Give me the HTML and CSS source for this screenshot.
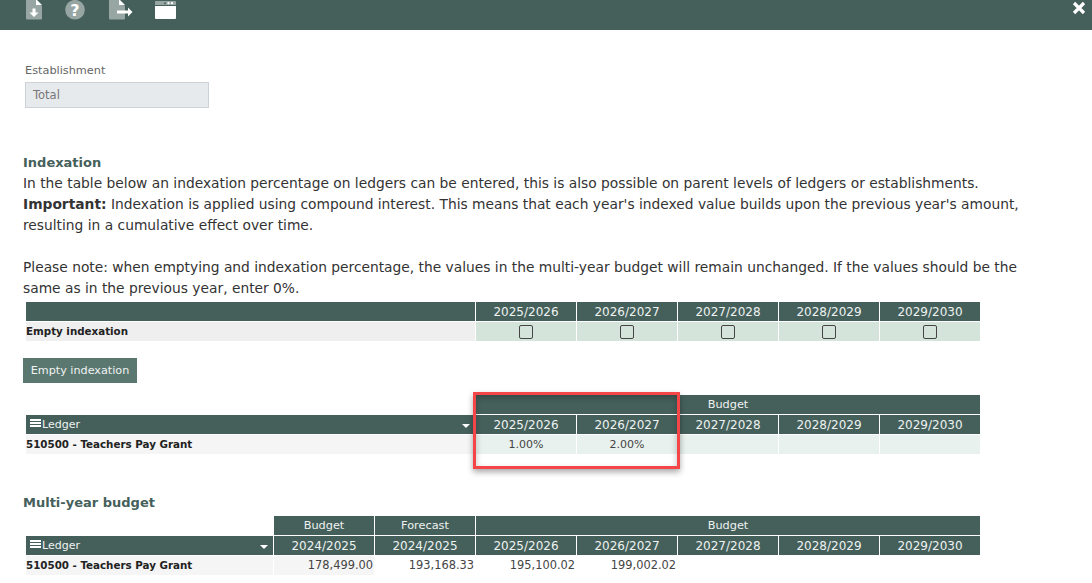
FILE: index.html
```html
<!DOCTYPE html>
<html lang="en">
<head>
    <meta charset="UTF-8">
    <title>Indexation</title>
    <link rel="stylesheet" href="styles.css">
</head>
<body>
    <div class="topbar">
        <div class="topbar-icons">
            <svg class="icon-doc" viewBox="0 0 16 20" width="16" height="20">
                <path d="M0 0H10L16 6V18.500a1 1 0 0 1-1 1H1a1 1 0 0 1-1-1Z" fill="#98a6a3"/>
                <path d="M10 -1L16 5H10Z" fill="#fff"/>
                <path d="M6.500 8.500H9.500V12.500H12.500L8 17L3.500 12.500H6.500Z" fill="#fff"/>
            </svg>
            <svg class="icon-help" viewBox="0 0 20 20" width="20" height="20">
                <circle cx="10" cy="9.700" r="9.800" fill="#98a6a3"/>
                <text x="10" y="15.500" text-anchor="middle" class="icon-help-mark">?</text>
            </svg>
            <svg class="icon-export" viewBox="0 0 24 20" width="24" height="20">
                <path d="M0 0H10L16 6V18.500a1 1 0 0 1-1 1H1a1 1 0 0 1-1-1Z" fill="#98a6a3"/>
                <path d="M10 -1L16 5H10Z" fill="#fff"/>
                <path d="M8 10.500H19V7.500L23.500 12L19 16.500V13.500H8Z" fill="#fff"/>
            </svg>
            <svg class="icon-window" viewBox="0 0 21 19" width="21" height="19">
                <path d="M1 0H20a1 1 0 0 1 1 1V4H0V1a1 1 0 0 1 1-1Z" fill="#98a6a3"/>
                <path d="M0 5H21V17a1 1 0 0 1-1 1H1a1 1 0 0 1-1-1Z" fill="#fff"/>
                <circle cx="10" cy="2.200" r="1" fill="#45605b"/>
                <circle cx="13.500" cy="2.200" r="1.100" fill="#fff"/>
                <circle cx="17" cy="2.200" r="1.100" fill="#fff"/>
            </svg>
        </div>
        <svg class="icon-close" viewBox="0 0 14 14" width="14" height="14">
            <path d="M2 2L12 12M12 2L2 12" stroke="#fff" stroke-width="3.200" fill="none"/>
        </svg>
    </div>

    <div class="content">
        <div class="field">
            <label class="field-label">Establishment</label>
            <div class="field-input">Total</div>
        </div>

        <h3 class="section-title">Indexation</h3>
        <p class="intro">In the table below an indexation percentage on ledgers can be entered, this is also possible on parent levels of ledgers or establishments.<br>
        <b>Important:</b> Indexation is applied using compound interest. This means that each year's indexed value builds upon the previous year's amount,<br>
        resulting in a cumulative effect over time.</p>
        <p class="intro note">Please note: when emptying and indexation percentage, the values in the multi-year budget will remain unchanged. If the values should be the<br>
        same as in the previous year, enter 0%.</p>

        <table class="grid">
            <colgroup><col class="col-wide"><col class="col-year"><col class="col-year"><col class="col-year"><col class="col-year"><col class="col-year"></colgroup>
            <tr>
                <th></th><th>2025/2026</th><th>2026/2027</th><th>2027/2028</th><th>2028/2029</th><th>2029/2030</th>
            </tr>
            <tr class="row-check">
                <td class="row-name row-name-dark">Empty indexation</td>
                <td class="check-cell"><span class="check"></span></td>
                <td class="check-cell"><span class="check"></span></td>
                <td class="check-cell"><span class="check"></span></td>
                <td class="check-cell"><span class="check"></span></td>
                <td class="check-cell"><span class="check"></span></td>
            </tr>
        </table>

        <button class="btn">Empty indexation</button>

        <div class="highlight-wrap">
            <table class="grid">
                <colgroup><col class="col-wide"><col class="col-year"><col class="col-year"><col class="col-year"><col class="col-year"><col class="col-year"></colgroup>
                <tr>
                    <td class="blank"></td><th class="label" colspan="5">Budget</th>
                </tr>
                <tr>
                    <th class="ledger-head"><span class="ledger-inner"><span class="burger"></span>Ledger<span class="caret"></span></span></th>
                    <th>2025/2026</th><th>2026/2027</th><th>2027/2028</th><th>2028/2029</th><th>2029/2030</th>
                </tr>
                <tr>
                    <td class="row-name">510500 - Teachers Pay Grant</td>
                    <td class="pct">1.00%</td><td class="pct">2.00%</td><td class="pct"></td><td class="pct"></td><td class="pct"></td>
                </tr>
            </table>
            <div class="red-box"></div>
        </div>

        <h3 class="section-title multi">Multi-year budget</h3>
        <table class="grid">
            <colgroup><col class="col-ledger"><col class="col-year"><col class="col-year"><col class="col-year"><col class="col-year"><col class="col-year"><col class="col-year"><col class="col-year"></colgroup>
            <tr>
                <td class="blank"></td><th class="label">Budget</th><th class="label">Forecast</th><th class="label" colspan="5">Budget</th>
            </tr>
            <tr>
                <th class="ledger-head"><span class="ledger-inner"><span class="burger"></span>Ledger<span class="caret"></span></span></th>
                <th>2024/2025</th><th>2024/2025</th><th>2025/2026</th><th>2026/2027</th><th>2027/2028</th><th>2028/2029</th><th>2029/2030</th>
            </tr>
            <tr>
                <td class="row-name">510500 - Teachers Pay Grant</td>
                <td class="num num-shaded">178,499.00</td><td class="num">193,168.33</td><td class="num">195,100.02</td><td class="num">199,002.02</td><td class="num"></td><td class="num"></td><td class="num"></td>
            </tr>
        </table>
    </div>
</body>
</html>
```

FILE: styles.css
```css
html, body {
    margin: 0;
    padding: 0;
    height: 583px;
    overflow: hidden;
    background-color: #fff;
}

body {
    font-family: 'DejaVu Sans', sans-serif;
    color: #333;
}

.topbar {
    height: 30px;
    background-color: #45605b;
    display: flex;
    justify-content: space-between;
    overflow: hidden;
}

.topbar-icons {
    display: flex;
    align-items: flex-start;
    padding-left: 26px;
}

.icon-help {
    margin-left: 23px;
}

.icon-export {
    margin-left: 24px;
}

.icon-window {
    margin-left: 22px;
    margin-top: 1px;
}

.icon-help-mark {
    font-family: 'DejaVu Sans', sans-serif;
    font-weight: bold;
    font-size: 16px;
    fill: #fff;
}

.icon-close {
    margin: 1px 6px 0 0;
}

.content {
    padding-left: 23px;
}

.field {
    padding: 34px 0 0 2px;
}

.field-label {
    display: block;
    font-size: 11.300px;
    line-height: 13px;
    color: #666;
    margin-bottom: 5px;
}

.field-input {
    box-sizing: border-box;
    width: 184px;
    height: 26px;
    background-color: #e7eaed;
    border: 1px solid #cdd2d8;
    font-size: 11.500px;
    line-height: 25px;
    padding-left: 7px;
    color: #777;
}

.section-title {
    margin: 46px 0 0;
    font-size: 13px;
    line-height: 17px;
    font-weight: bold;
    color: #45605b;
}

.section-title.multi {
    margin-top: 39px;
    margin-bottom: 4px;
}

.intro {
    margin: 2px 0 0;
    width: 1040px;
    font-size: 13.800px;
    line-height: 21px;
    color: #333;
}

.intro b {
    font-weight: bold;
}

.note {
    margin-top: 21px;
    margin-bottom: 2px;
}

.grid {
    border-collapse: separate;
    border-spacing: 1px;
    table-layout: fixed;
    width: 956px;
    margin-left: 2px;
}

.col-wide {
    width: 449px;
}

.col-ledger {
    width: 247px;
}

.col-year {
    width: 100px;
}

.grid th {
    height: 19px;
    padding: 0;
    background-color: #45605b;
    color: #eef2f1;
    font-weight: normal;
    font-size: 12px;
    text-align: center;
}

.grid th.label {
    font-size: 11.300px;
}

.grid td {
    height: 19px;
    padding: 0;
    font-size: 10.300px;
}

.grid td.blank {
    background: none;
}

.grid td.row-name {
    height: 18px;
    padding-bottom: 1px;
    background-color: #f4f5f4;
    font-weight: bold;
    color: #222;
}

.grid td.row-name-dark {
    background-color: #efefef;
}

.check-cell {
    background-color: #d5e4db;
    text-align: center;
}

.check {
    display: inline-block;
    box-sizing: border-box;
    width: 14px;
    height: 14px;
    margin-top: 1px;
    border: 1px solid #444;
    border-radius: 2px;
    vertical-align: top;
}

.btn {
    display: block;
    box-sizing: border-box;
    width: 114px;
    height: 25px;
    margin: 16px 0 11px;
    padding: 0;
    border: none;
    background-color: #5b7870;
    color: #f0f3f2;
    font-family: inherit;
    font-size: 11.200px;
}

.highlight-wrap {
    position: relative;
}

.grid th.ledger-head {
    font-size: 11px;
}

.ledger-inner {
    display: flex;
    align-items: center;
    padding: 0 5px 0 4px;
    text-align: left;
}

.burger {
    width: 11px;
    height: 8px;
    margin: -3px 1px 0 0;
    background: repeating-linear-gradient(#fff 0 2px, transparent 2px 3px);
}

.caret {
    margin-left: auto;
    margin-top: 2px;
    border-left: 4px solid transparent;
    border-right: 4px solid transparent;
    border-top: 4px solid #fff;
}

.grid td.pct {
    background-color: #e8f1ed;
    text-align: center;
    color: #444;
    font-size: 11px;
}

.grid td.num {
    height: 18px;
    padding: 0 1px 1px 0;
    text-align: right;
    color: #444;
    font-size: 11.400px;
}

.grid td.num-shaded {
    background-color: #f4f5f4;
}

.red-box {
    position: absolute;
    left: 450px;
    top: -2px;
    width: 201px;
    height: 71px;
    border: 3px solid #f44549;
    box-shadow: 0 3px 6px rgba(0, 0, 0, 0.35), inset 0 3px 6px rgba(0, 0, 0, 0.25);
}
```
